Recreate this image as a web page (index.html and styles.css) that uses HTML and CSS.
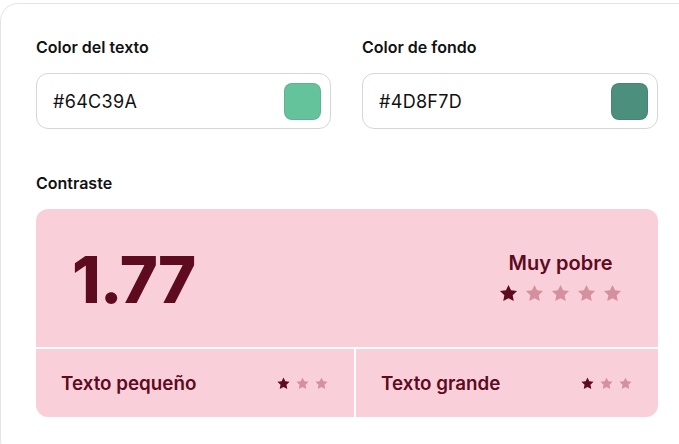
FILE: index.html
```html
<!DOCTYPE html>
<html lang="es">
<head>
<meta charset="utf-8">
<title>Contraste</title>
<link rel="stylesheet" href="styles.css">
</head>
<body>
<div class="card">
  <div class="pickers">
    <div class="field">
      <div class="label">Color del texto</div>
      <div class="input">
        <span class="hex">#64C39A</span>
        <span class="swatch swatch-text"></span>
      </div>
    </div>
    <div class="field">
      <div class="label">Color de fondo</div>
      <div class="input">
        <span class="hex">#4D8F7D</span>
        <span class="swatch swatch-bg"></span>
      </div>
    </div>
  </div>

  <div class="label contrast-label">Contraste</div>
  <div class="result">
    <div class="result-top">
      <div class="ratio">1.77</div>
      <div class="rating">
        <div class="rating-text">Muy pobre</div>
        <div class="stars stars-lg">
          <svg viewBox="0 0 24 24" class="star on"><path d="M12 2.2l2.95 6.2 6.8.85-5 4.7 1.3 6.75L12 17.4l-6.05 3.3 1.3-6.75-5-4.7 6.8-.85z"/></svg>
          <svg viewBox="0 0 24 24" class="star"><path d="M12 2.2l2.95 6.2 6.8.85-5 4.7 1.3 6.75L12 17.4l-6.05 3.3 1.3-6.75-5-4.7 6.8-.85z"/></svg>
          <svg viewBox="0 0 24 24" class="star"><path d="M12 2.2l2.95 6.2 6.8.85-5 4.7 1.3 6.75L12 17.4l-6.05 3.3 1.3-6.75-5-4.7 6.8-.85z"/></svg>
          <svg viewBox="0 0 24 24" class="star"><path d="M12 2.2l2.95 6.2 6.8.85-5 4.7 1.3 6.75L12 17.4l-6.05 3.3 1.3-6.75-5-4.7 6.8-.85z"/></svg>
          <svg viewBox="0 0 24 24" class="star"><path d="M12 2.2l2.95 6.2 6.8.85-5 4.7 1.3 6.75L12 17.4l-6.05 3.3 1.3-6.75-5-4.7 6.8-.85z"/></svg>
        </div>
      </div>
    </div>
    <div class="result-bottom">
      <div class="cell">
        <span class="cell-text">Texto pequeño</span>
        <div class="stars stars-sm">
          <svg viewBox="0 0 24 24" class="star on"><path d="M12 2.2l2.95 6.2 6.8.85-5 4.7 1.3 6.75L12 17.4l-6.05 3.3 1.3-6.75-5-4.7 6.8-.85z"/></svg>
          <svg viewBox="0 0 24 24" class="star"><path d="M12 2.2l2.95 6.2 6.8.85-5 4.7 1.3 6.75L12 17.4l-6.05 3.3 1.3-6.75-5-4.7 6.8-.85z"/></svg>
          <svg viewBox="0 0 24 24" class="star"><path d="M12 2.2l2.95 6.2 6.8.85-5 4.7 1.3 6.75L12 17.4l-6.05 3.3 1.3-6.75-5-4.7 6.8-.85z"/></svg>
        </div>
      </div>
      <div class="cell">
        <span class="cell-text">Texto grande</span>
        <div class="stars stars-sm">
          <svg viewBox="0 0 24 24" class="star on"><path d="M12 2.2l2.95 6.2 6.8.85-5 4.7 1.3 6.75L12 17.4l-6.05 3.3 1.3-6.75-5-4.7 6.8-.85z"/></svg>
          <svg viewBox="0 0 24 24" class="star"><path d="M12 2.2l2.95 6.2 6.8.85-5 4.7 1.3 6.75L12 17.4l-6.05 3.3 1.3-6.75-5-4.7 6.8-.85z"/></svg>
          <svg viewBox="0 0 24 24" class="star"><path d="M12 2.2l2.95 6.2 6.8.85-5 4.7 1.3 6.75L12 17.4l-6.05 3.3 1.3-6.75-5-4.7 6.8-.85z"/></svg>
        </div>
      </div>
    </div>
  </div>
</div>
</body>
</html>
```
FILE: styles.css
```css
html, body {
  margin: 0;
  padding: 0;
  background: #ffffff;
  overflow: hidden;
  font-family: Inter, "Noto Sans", "Liberation Sans", sans-serif;
  color: #111111;
}

.card {
  margin: 3px 0 0 0;
  width: 720px;
  box-sizing: border-box;
  border: 1px solid #e4e4e4;
  border-radius: 18px;
  padding: 33px 0 40px 35px;
}

.pickers {
  display: grid;
  grid-template-columns: 295px 296px;
  column-gap: 31px;
}

.label {
  font-size: 16px;
  font-weight: 600;
  line-height: 20px;
  color: #111111;
}

.input {
  margin-top: 16px;
  height: 56px;
  box-sizing: border-box;
  border: 1px solid #d6d6d6;
  border-radius: 12px;
  display: flex;
  align-items: center;
  justify-content: space-between;
  padding: 0 9px 0 16px;
}

.hex {
  font-size: 18px;
  letter-spacing: 0.3px;
  color: #111111;
}

.swatch {
  width: 37px;
  height: 37px;
  box-sizing: border-box;
  border-radius: 8px;
  border: 1px solid rgba(0, 0, 0, 0.08);
}

.swatch-text { background: #64C39A; }
.swatch-bg { background: #4D8F7D; }

.contrast-label {
  margin-top: 44px;
}

.result {
  margin-top: 16px;
  width: 622px;
  border-radius: 12px;
  overflow: hidden;
  background: #ffffff;
  display: flex;
  flex-direction: column;
  gap: 2px;
  color: #5e0a1f;
}

.result-top {
  height: 138px;
  background: #f9d0da;
  display: flex;
  align-items: center;
  justify-content: space-between;
  padding: 0 35px 0 36px;
}

.ratio {
  font-size: 65px;
  font-weight: 800;
  letter-spacing: -1px;
  line-height: 1;
  margin-top: 2px;
}

.rating {
  display: flex;
  flex-direction: column;
  align-items: center;
  gap: 9px;
}

.rating-text {
  font-size: 20px;
  font-weight: 600;
  line-height: 22px;
}

.stars {
  display: flex;
}

.star {
  fill: #d4909f;
  display: block;
}

.star.on {
  fill: #5e0a1f;
}

.stars-lg {
  gap: 5px;
}

.stars-lg .star {
  width: 21px;
  height: 21px;
}

.stars-sm {
  gap: 4px;
}

.stars-sm .star {
  width: 15px;
  height: 15px;
}

.result-bottom {
  height: 68px;
  display: grid;
  grid-template-columns: 318px 302px;
  column-gap: 2px;
}

.cell {
  background: #f9d0da;
  display: flex;
  align-items: center;
  justify-content: space-between;
  padding: 0 25px 0 25px;
}

.cell-text {
  font-size: 18.8px;
  font-weight: 600;
}
```
